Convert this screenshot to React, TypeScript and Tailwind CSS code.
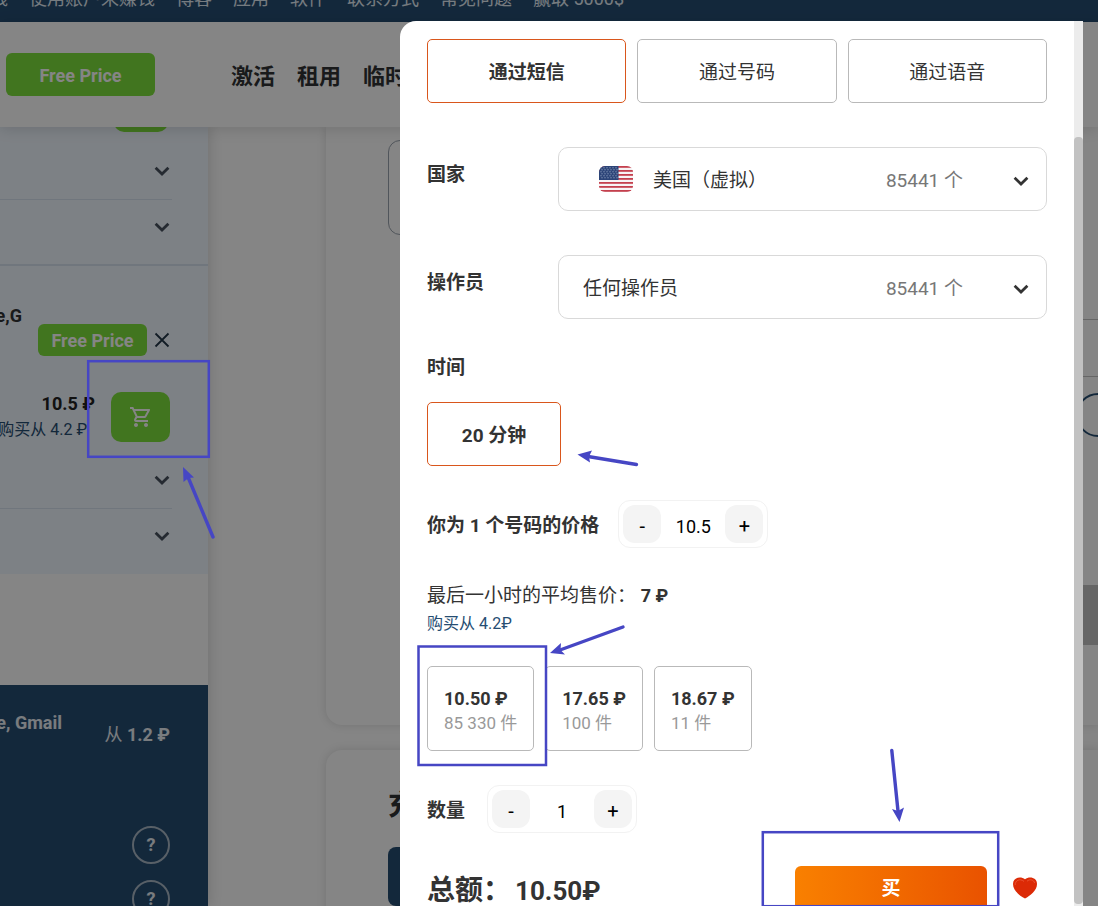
import React, { useState } from "react";

const topLinks = [
  "赚钱",
  "使用账户来赚钱",
  "博客",
  "应用",
  "软件",
  "联系方式",
  "常见问题",
  "赢取 5000$",
];

const offers = [
  { price: "10.50 ₽", count: "85 330 件" },
  { price: "17.65 ₽", count: "100 件" },
  { price: "18.67 ₽", count: "11 件" },
];

function Chevron() {
  return (
    <svg
      className="w-4 h-4 shrink-0"
      viewBox="0 0 16 16"
      fill="none"
      stroke="currentColor"
      strokeWidth="2.8"
      aria-hidden="true"
    >
      <path d="M1.6 4.800L8 11L14.400 4.800" />
    </svg>
  );
}

function Flag() {
  const stripes = [0, 2, 4, 6, 8, 10, 12];
  const stars: number[][] = [];
  for (let row = 0; row < 6; row++) {
    for (let col = 0; col < 6; col++) {
      stars.push([2 + col * 3 + (row % 2), 1.8 + row * 2]);
    }
  }
  return (
    <svg
      className="w-[34px] h-[26px] shrink-0 rounded-md"
      viewBox="0 0 34 26"
      aria-hidden="true"
    >
      <rect width="34" height="26" fill="#f7f3f4" />
      {stripes.map((i) => (
        <rect key={i} y={i * 2} width="34" height="1.8" fill="#c4404e" />
      ))}
      <rect width="19.5" height="14" fill="#2c4478" />
      {stars.map(([x, y]) => (
        <circle key={x + "-" + y} cx={x} cy={y} r="0.5" fill="#c9d2e4" />
      ))}
    </svg>
  );
}

function TopBar() {
  return (
    <div className="h-[22px] overflow-hidden bg-[#264d72] flex items-end pb-[11px]">
      <nav className="flex gap-[21px] -ml-7 text-lg leading-6 whitespace-nowrap text-[#e3edf5]">
        {topLinks.map((link) => (
          <a href="#" key={link}>
            {link}
          </a>
        ))}
      </nav>
    </div>
  );
}

function Header() {
  return (
    <header className="relative z-10 h-[105px] bg-white shadow-[0_2px_14px_rgba(0,0,0,0.14)] flex items-center pl-1.5 gap-[76px]">
      <button
        type="button"
        className="w-[149px] h-[43px] pt-0.5 rounded-md bg-[#7ee03c] text-white text-lg font-bold shrink-0"
      >
        Free Price
      </button>
      <nav className="flex gap-[22px] pt-1 text-[22px] font-bold text-[#303234] whitespace-nowrap">
        <a href="#">激活</a>
        <a href="#">租用</a>
        <a href="#">临时</a>
      </nav>
    </header>
  );
}

function CollapsedRow({ name }: { name: string }) {
  return (
    <button
      type="button"
      aria-label={name}
      className="h-[55px] w-full flex items-center justify-end pr-[38px] pb-0.5 text-[#47525f]"
    >
      <Chevron />
    </button>
  );
}

function Sidebar() {
  return (
    <aside className="w-[208px] shrink-0 flex flex-col bg-white shadow-[2px_0_12px_rgba(0,0,0,0.14)]">
      <div className="bg-[#f0f7ff]">
        <div className="h-[5px] overflow-hidden flex items-end justify-end gap-[70px] pr-10">
          <span className="text-base leading-6 whitespace-nowrap text-[#264d72]">
            购买从 4.2 ₽
          </span>
          <span className="w-[54px] h-10 shrink-0 rounded-[10px] bg-[#7ee03c]" />
        </div>
        <div className="pt-3 pb-[9px] border-b-2 border-[#d6e2f0]">
          <CollapsedRow name="service 1" />
          <div className="w-[172px] border-b border-[#d6e2f0]" />
          <CollapsedRow name="service 2" />
        </div>

        <div className="pt-[38px] pr-[38px]">
          <div className="text-lg leading-6 font-bold text-[#303234] w-[22px] flex justify-end whitespace-nowrap">
            Google,Youtube,G
          </div>
          <div className="-mt-1 flex items-center justify-end gap-[7px]">
            <button
              type="button"
              className="w-[109px] h-8 pt-0.5 rounded-md bg-[#7ee03c] text-white text-lg font-bold"
            >
              Free Price
            </button>
            <button type="button" aria-label="close">
              <svg
                className="w-4 h-4"
                viewBox="0 0 16 16"
                stroke="#223647"
                strokeWidth="1.8"
                aria-hidden="true"
              >
                <path d="M1.5 1.5L14.5 14.5M14.5 1.5L1.5 14.5" />
              </svg>
            </button>
          </div>
          <div className="mt-[35px] flex justify-end items-center gap-4">
            <div className="flex flex-col items-end whitespace-nowrap">
              <div className="text-lg leading-[26px] font-bold text-[#222]">
                10.5 ₽
              </div>
              <div className="text-base leading-[26px] text-[#264d72] pr-2">
                购买从 4.2 ₽
              </div>
            </div>
            <button
              type="button"
              aria-label="cart"
              className="w-[59px] h-[50px] shrink-0 rounded-[10px] bg-[#7ee03c] flex items-center justify-center"
            >
              <svg
                className="w-6 h-6"
                viewBox="0 0 24 24"
                fill="white"
                aria-hidden="true"
              >
                <path d="M15.55 13c.75 0 1.41-.41 1.75-1.03l3.58-6.49A.996.996 0 0 0 20.01 4H5.21l-.94-2H1v2h2l3.6 7.59-1.35 2.44C4.52 15.37 5.48 17 7 17h12v-2H7l1.1-2h7.45zM6.16 6h12.15l-2.76 5H8.53L6.16 6zM7 18c-1.1 0-1.99.9-1.99 2S5.9 22 7 22s2-.9 2-2-.9-2-2-2zm10 0c-1.1 0-1.99.9-1.99 2s.89 2 1.99 2 2-.9 2-2-.9-2-2-2z" />
              </svg>
            </button>
          </div>
        </div>
        <div className="pt-2.5 pb-2.5">
          <CollapsedRow name="service 3" />
          <div className="w-[172px] border-b border-[#d6e2f0]" />
          <CollapsedRow name="service 4" />
        </div>
      </div>

      <div className="h-[111px] shrink-0" />

      <div className="flex-1 bg-[#264d72] text-[#e8eef4] pt-[26px] pr-[38px]">
        <div className="flex justify-between">
          <div className="w-[62px] flex justify-end text-lg leading-6 font-bold whitespace-nowrap">
            Google, Youtube, Gmail
          </div>
          <div className="pt-3 text-lg leading-6 whitespace-nowrap">
            从 <b>1.2 ₽</b>
          </div>
        </div>
        <div className="pt-[79px] flex flex-col items-end gap-4">
          {[1, 2].map((i) => (
            <button
              type="button"
              key={i}
              className="w-[38px] h-[38px] shrink-0 rounded-full border-2 border-[#a9b8c6] text-lg font-bold"
            >
              ?
            </button>
          ))}
        </div>
      </div>
    </aside>
  );
}

function Content() {
  return (
    <main className="flex-1 min-w-0 flex flex-col gap-[25px] pl-[118px]">
      <section className="h-[598px] shrink-0 rounded-bl-2xl shadow-[0_0_10px_rgba(0,0,0,0.14)] pl-[62px] pt-[13px] flex">
        <div className="flex-1 h-[95px] rounded-xl border border-[#9aa3ae]" />
        {/* right edge of the info column */}
        <div className="w-[22px] shrink-0 pt-[179px]">
          <div className="h-[58px] border-y border-[#c4c4c4]" />
          <div className="mt-4 w-11 h-11 rounded-full border-2 border-[#264d72]" />
          <div className="mt-[148px] h-[60px] bg-[#c4c4c4]" />
        </div>
      </section>
      <section className="h-[300px] shrink-0 rounded-tl-2xl shadow-[0_0_10px_rgba(0,0,0,0.14)] pl-[62px] pt-9">
        <h2 className="text-[28px] leading-10 font-bold text-[#303234]">充</h2>
        <button
          type="button"
          aria-label="充值"
          className="mt-[21px] w-[200px] h-[59px] rounded-lg bg-[#264d72]"
        />
      </section>
    </main>
  );
}

type StepperProps = {
  id: string;
  value: number;
  step: number;
  onChange: (value: number) => void;
};

function Stepper({ id, value, step, onChange }: StepperProps) {
  return (
    <div className="w-[150px] h-12 flex items-center justify-between rounded-xl border border-[#f2f2f2] px-1 text-xl text-black">
      <button
        type="button"
        aria-label="minus"
        className="w-[38px] h-[38px] shrink-0 rounded-xl bg-[#f4f4f4] pt-1"
        onClick={() => onChange(Math.max(step, value - step))}
      >
        -
      </button>
      <input
        id={id}
        type="text"
        className="w-16 pt-1.5 text-center text-lg focus:outline-none"
        value={value}
        onChange={(event) => onChange(Number(event.target.value) || 0)}
      />
      <button
        type="button"
        aria-label="plus"
        className="w-[38px] h-[38px] shrink-0 rounded-xl bg-[#f4f4f4] pt-1"
        onClick={() => onChange(value + step)}
      >
        +
      </button>
    </div>
  );
}

function OrderModal() {
  const [mode, setMode] = useState("通过短信");
  const [price, setPrice] = useState(10.5);
  const [amount, setAmount] = useState(1);

  return (
    <div
      role="dialog"
      aria-label="购买"
      className="w-[683px] max-w-full h-full flex bg-white rounded-tl-2xl overflow-hidden text-[19px] text-[#333]"
    >
      <form
        className="flex-1 min-w-0 px-[27px] pt-[18px]"
        onSubmit={(event) => event.preventDefault()}
      >
        <div className="grid grid-cols-3 gap-[11px]">
          {["通过短信", "通过号码", "通过语音"].map((item) => (
            <button
              type="button"
              key={item}
              onClick={() => setMode(item)}
              className={
                item === mode
                  ? "h-16 pt-1 rounded-[5px] border border-[#d9561c] font-bold"
                  : "h-16 pt-1 rounded-[5px] border border-[#b9b9b9]"
              }
            >
              {item}
            </button>
          ))}
        </div>

        <div className="mt-11 flex">
          <label htmlFor="country" className="w-[131px] pt-3.5 font-bold">
            国家
          </label>
          <div className="flex-1 min-w-0 h-16 flex items-center rounded-[10px] border border-[#d9d9d9] pl-10 pr-[17px]">
            <Flag />
            <div className="flex-1 min-w-0 flex items-center pt-1">
              <select
                id="country"
                className="appearance-none flex-1 min-w-0 ml-5 focus:outline-none"
              >
                <option>美国（虚拟）</option>
              </select>
              <span className="mr-[50px] text-[#777]">85441 个</span>
              <Chevron />
            </div>
          </div>
        </div>

        <div className="mt-11 flex">
          <label htmlFor="operator" className="w-[131px] pt-3.5 font-bold">
            操作员
          </label>
          <div className="flex-1 min-w-0 h-16 flex items-center rounded-[10px] border border-[#d9d9d9] pl-6 pr-[17px] pt-1">
            <select
              id="operator"
              className="appearance-none flex-1 min-w-0 focus:outline-none"
            >
              <option>任何操作员</option>
            </select>
            <span className="mr-[50px] text-[#777]">85441 个</span>
            <Chevron />
          </div>
        </div>

        <div className="mt-[35px] leading-7 font-bold">时间</div>
        <button
          type="button"
          className="mt-5 block w-[134px] h-16 pt-1 rounded-[5px] border border-[#d9561c] font-bold"
        >
          20 分钟
        </button>

        <div className="mt-[34px] flex items-center gap-[19px]">
          <label htmlFor="price" className="pt-1 font-bold">
            你为 1 个号码的价格
          </label>
          <Stepper id="price" value={price} step={0.5} onChange={setPrice} />
        </div>

        <div className="mt-[34px] leading-7">
          最后一小时的平均售价： <b className="text-lg leading-7">7 ₽</b>
        </div>
        <div className="text-base leading-7 text-[#264d72]">购买从 4.2₽</div>

        <div className="mt-7 flex gap-[11px]">
          {offers.map((offer) => (
            <button
              type="button"
              key={offer.price}
              className="h-[85px] px-4 pt-1 rounded-[5px] border border-[#b9b9b9] text-left"
              onClick={() => setPrice(parseFloat(offer.price))}
            >
              <div className="text-lg leading-[25px] font-bold">
                {offer.price}
              </div>
              <div className="text-[17px] leading-[25px] text-[#999]">
                {offer.count}
              </div>
            </button>
          ))}
        </div>

        <div className="mt-[34px] flex items-center gap-[22px]">
          <label htmlFor="amount" className="pt-1 font-bold">
            数量
          </label>
          <Stepper id="amount" value={amount} step={1} onChange={setAmount} />
        </div>

        <div className="mt-[33px] flex items-start">
          <div className="flex-1 pt-0.5 leading-[46px] text-[28px] font-bold whitespace-nowrap">
            总额：
            <span className="pl-1 text-[26px]">
              {(price * amount).toFixed(2)}₽
            </span>
          </div>
          <button
            type="submit"
            className="w-[192px] h-[46px] rounded-md bg-linear-to-r from-[#f98000] to-[#e95200] text-white font-bold"
          >
            买
          </button>
          <button
            type="button"
            aria-label="favourite"
            className="ml-[25px] mr-[9px] h-11 shrink-0"
          >
            <svg className="w-[26px] h-6" viewBox="0 0 26 24" aria-hidden="true">
              <path
                d="M13 22.5C8 20 1 14.5 1 8C1 1.500 8.500 0 13 3.200C17.500 0 25 1.500 25 8C25 14.500 18 20 13 22.500Z"
                fill="#dc2a06"
              />
              <path
                d="M3.200 9C3 4.500 8 2 12 5.400M15 5.200C18 2.500 22 4 22.600 7"
                fill="none"
                stroke="#ee5a3c"
                strokeWidth="0.8"
              />
            </svg>
          </button>
        </div>
      </form>

      {/* scrollbar */}
      <div className="w-[9px] pb-0.5 flex flex-col bg-[#ececec]">
        <div className="h-[116px] shrink-0" />
        <div className="flex-1 rounded bg-[#c2c2c2]" />
      </div>
    </div>
  );
}

// hand-drawn hints pinned over the page
function Hints() {
  return (
    <svg
      className="absolute inset-0 w-full h-full pointer-events-none"
      fill="none"
      stroke="#4646c4"
      aria-hidden="true"
    >
      <g strokeWidth="2.5">
        <rect x="88.2" y="361.2" width="120.6" height="95.6" />
        <rect x="418.5" y="646.5" width="127.5" height="118.5" />
        <rect x="762.8" y="832.2" width="235.4" height="74" />
      </g>
      <g strokeWidth="3.4" strokeLinecap="round">
        <path d="M213 537L188 477" />
        <path d="M636.5 464.5L588 456.5" />
        <path d="M623 627L560 650" />
        <path d="M891.8 750.5L898 811" />
      </g>
      <g fill="#4646c4" stroke="none">
        <path d="M183 467L194 477.5L188.5 478L183.500 482Z" />
        <path d="M577.5 454.5L592 450.5L589 456.5L590 462.5Z" />
        <path d="M550 653L561 643L560.5 650L565 654.500Z" />
        <path d="M899.5 822L892 809L898 811L904 807.5Z" />
      </g>
    </svg>
  );
}

function App() {
  return (
    <div className="relative h-screen overflow-hidden flex flex-col bg-white font-['Roboto','Noto_Sans_CJK_SC',sans-serif]">
      <TopBar />
      <Header />
      <div className="flex-1 min-h-0 flex">
        <Sidebar />
        <Content />
      </div>

      <div className="absolute inset-0 z-20 flex justify-end pt-[21px] pr-[15px] bg-black/48">
        <OrderModal />
      </div>
      <div className="absolute inset-0 z-30 pointer-events-none">
        <Hints />
      </div>
    </div>
  );
}

export default App;
